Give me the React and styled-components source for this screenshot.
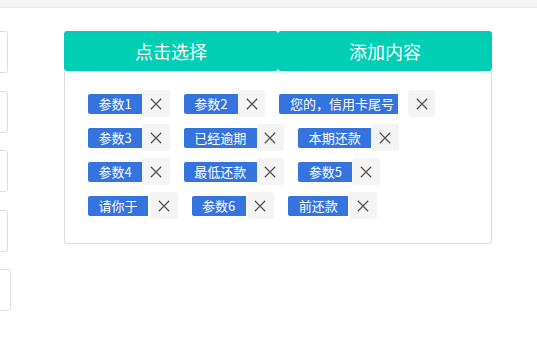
import React from "react";
import styled, { createGlobalStyle } from "styled-components";

const GlobalStyle = createGlobalStyle`
  html, body {
    margin: 0;
    padding: 0;
    background: #ffffff;
    font-family: "Noto Sans CJK SC", "Noto Sans", sans-serif;
    overflow: hidden;
  }
`;

const tags = [
  { label: "参数1" },
  { label: "参数2" },
  { label: "您的，信用卡尾号", gap: 10, padRight: 4 },
  { label: "参数3" },
  { label: "已经逾期" },
  { label: "本期还款" },
  { label: "参数4" },
  { label: "最低还款" },
  { label: "参数5" },
  { label: "请你于", gap: 2 },
  { label: "参数6", gap: 1 },
  { label: "前还款", gap: 1 },
];

function CloseIcon() {
  return (
    <svg width="12" height="12" viewBox="0 0 12 12">
      <path
        d="M0.8 0.8 L11.2 11.2 M11.2 0.8 L0.8 11.2"
        stroke="#555"
        strokeWidth="1.3"
        fill="none"
      />
    </svg>
  );
}

function App() {
  return (
    <>
      <GlobalStyle />
      <TopBar />
      <Main>
        <LeftColumn>
          <FieldBox />
          <FieldBox />
          <FieldBox />
          <FieldBox />
          <FieldBox $wide />
        </LeftColumn>
        <Editor>
          <Header>
            <HeaderButton>点击选择</HeaderButton>
            <HeaderButton>添加内容</HeaderButton>
          </Header>
          <Panel>
            <TagList>
              {tags.map((tag, index) => (
                <Tag key={index} $gap={tag.gap}>
                  <TagLabel $padRight={tag.padRight}>{tag.label}</TagLabel>
                  <TagClose>
                    <CloseIcon />
                  </TagClose>
                </Tag>
              ))}
            </TagList>
          </Panel>
        </Editor>
      </Main>
    </>
  );
}

const TopBar = styled.div`
  height: 7px;
  background: #f6f6f6;
  border-bottom: 1px solid #ebebeb;
`;

const Main = styled.div`
  display: flex;
  align-items: flex-start;
  padding-top: 23px;
`;

const LeftColumn = styled.div`
  display: flex;
  flex-direction: column;
  gap: 17.5px;
  width: 68px;
  margin-left: -60px;
  flex-shrink: 0;
`;

const FieldBox = styled.div`
  box-sizing: border-box;
  height: 42px;
  width: ${(p) => (p.$wide ? "71px" : "68px")};
  border: 1px solid #dedede;
  border-radius: 3px;
  background: #fff;
`;

const Editor = styled.div`
  width: 428px;
  margin-left: 56px;
`;

const Header = styled.div`
  display: flex;
  height: 40px;
`;

const HeaderButton = styled.div`
  flex: 1;
  display: flex;
  align-items: center;
  justify-content: center;
  background: #00cfb4;
  border-radius: 3px;
  color: #ffffff;
  font-size: 18px;
`;

const Panel = styled.div`
  box-sizing: border-box;
  border: 1px solid #dcdcdc;
  border-top: none;
  border-radius: 0 0 3px 3px;
  padding: 19px 23px 24px;
`;

const TagList = styled.div`
  display: flex;
  flex-wrap: wrap;
  column-gap: 14px;
  row-gap: 7px;
`;

const Tag = styled.div`
  display: flex;
  align-items: center;
  gap: ${(p) => p.$gap || 0}px;
`;

const TagLabel = styled.span`
  display: flex;
  align-items: center;
  height: 20px;
  padding: 0 ${(p) => (p.$padRight !== undefined ? p.$padRight : 10.5)}px 0 10.5px;
  background: #3574de;
  color: #ffffff;
  font-size: 13px;
  border-radius: 2px 0 0 2px;
  white-space: nowrap;
`;

const TagClose = styled.span`
  display: flex;
  align-items: center;
  justify-content: center;
  width: 27.5px;
  height: 27px;
  background: #f4f4f4;
  border-radius: 3px;
`;

export default App;
